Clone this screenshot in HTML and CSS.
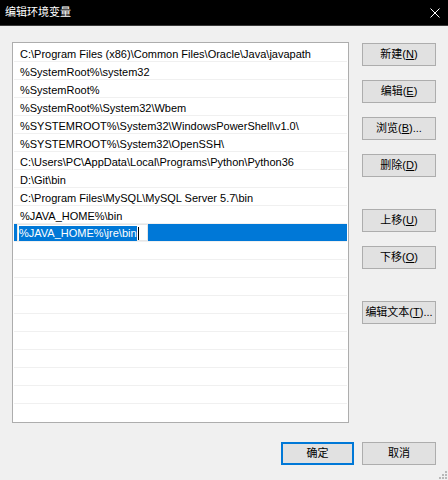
FILE: index.html
```html
<!DOCTYPE html>
<html lang="zh-CN">
<head>
<meta charset="utf-8">
<title>编辑环境变量</title>
<link rel="stylesheet" href="styles.css">
</head>
<body>
<div class="window">
  <div class="titlebar">
    <span class="title">编辑环境变量</span>
    <span class="close">
      <svg width="10" height="10" viewBox="0 0 10 10"><path d="M0.5 0.5 L9.5 9.5 M9.5 0.5 L0.5 9.5" stroke="#fff" stroke-width="1" fill="none"/></svg>
    </span>
  </div>
  <div class="body">
    <div class="main">
      <div class="list">
        <div class="row">C:\Program Files (x86)\Common Files\Oracle\Java\javapath</div>
        <div class="row">%SystemRoot%\system32</div>
        <div class="row">%SystemRoot%</div>
        <div class="row">%SystemRoot%\System32\Wbem</div>
        <div class="row">%SYSTEMROOT%\System32\WindowsPowerShell\v1.0\</div>
        <div class="row">%SYSTEMROOT%\System32\OpenSSH\</div>
        <div class="row">C:\Users\PC\AppData\Local\Programs\Python\Python36</div>
        <div class="row">D:\Git\bin</div>
        <div class="row">C:\Program Files\MySQL\MySQL Server 5.7\bin</div>
        <div class="row">%JAVA_HOME%\bin</div>
        <div class="row selected"><span class="edit"><span class="sel">%JAVA_HOME%\jre\bin</span><span class="caret"></span></span></div>
        <div class="row"></div>
        <div class="row"></div>
        <div class="row"></div>
        <div class="row"></div>
        <div class="row"></div>
        <div class="row"></div>
        <div class="row"></div>
        <div class="row"></div>
        <div class="row"></div>
        <div class="row last"></div>
      </div>
      <div class="side">
        <button class="btn">新建(<u>N</u>)</button>
        <button class="btn">编辑(<u>E</u>)</button>
        <button class="btn">浏览(<u>B</u>)...</button>
        <button class="btn">删除(<u>D</u>)</button>
        <button class="btn gap">上移(<u>U</u>)</button>
        <button class="btn">下移(<u>O</u>)</button>
        <button class="btn gap2">编辑文本(<u>T</u>)...</button>
      </div>
    </div>
    <div class="footer">
      <button class="btn default">确定</button>
      <button class="btn">取消</button>
    </div>
    <span class="grip">
      <svg width="8" height="8" viewBox="0 0 8 8" fill="#b8b8b8"><rect x="6" y="0" width="2" height="2"/><rect x="3" y="3" width="2" height="2"/><rect x="6" y="3" width="2" height="2"/><rect x="0" y="6" width="2" height="2"/><rect x="3" y="6" width="2" height="2"/><rect x="6" y="6" width="2" height="2"/></svg>
    </span>
  </div>
</div>
</body>
</html>
```
FILE: styles.css
```css
* { box-sizing: border-box; }
html, body { margin: 0; padding: 0; }
body {
  width: 448px;
  height: 480px;
  background: #f0f0f0;
  font-family: "Liberation Sans", "Noto Sans CJK SC", sans-serif;
  font-size: 11px;
  color: #000;
  overflow: hidden;
}
.window { width: 448px; height: 480px; display: flex; flex-direction: column; }
.titlebar {
  height: 26px;
  background: #000;
  color: #fff;
  display: flex;
  align-items: center;
  justify-content: space-between;
  padding: 0 8px 0 5px;
  border-bottom: 1px solid #3a3a3a;
}
.title { font-size: 11px; line-height: 1; }
.close { display: flex; align-items: center; }
.body { position: relative; flex: 1; padding: 16px 0 0 12px; }
.main { display: flex; }
.list {
  width: 337px;
  height: 381px;
  border: 1px solid #adadad;
  background: #fff;
  padding: 1px;
  overflow: hidden;
}
.row {
  height: 18px;
  border-bottom: 1px solid #f0f0f0;
  padding-left: 6px;
  line-height: 20px;
  white-space: nowrap;
  overflow: hidden;
}
.row.last { border-bottom: none; }
.row.selected { background: #0078d7; padding-left: 3px; display: flex; align-items: center; line-height: 15px; }
.edit {
  display: flex;
  width: 131px;
  height: 17px;
  background: #fff;
  border: 1px solid #e6e6e6;
  padding: 1px 0 0 1px;
  align-items: center;
}
.sel { background: #0078d7; color: #fff; line-height: 15px; height: 15px; }
.caret { width: 1px; height: 13px; margin-left: 1px; background: #000; }
.side {
  margin-left: 13px;
  display: flex;
  flex-direction: column;
  gap: 14px;
  padding-top: 1px;
}
.btn {
  width: 74px;
  height: 23px;
  background: #e1e1e1;
  border: 1px solid #adadad;
  font-family: "Liberation Sans", "Noto Sans CJK SC", sans-serif;
  font-size: 11px;
  color: #000;
  padding: 0;
  line-height: 21px;
  border-radius: 0;
  white-space: nowrap;
}
.btn u { text-underline-offset: 1px; }
.btn.gap { margin-top: 18px; }
.btn.gap2 { margin-top: 18px; }
.footer {
  display: flex;
  justify-content: flex-end;
  gap: 8px;
  padding-right: 12px;
  margin-top: 19px;
}
.btn.default { border: 2px solid #0078d7; width: 73px; line-height: 19px; }
.grip { position: absolute; right: 1px; bottom: 1px; display: flex; }
```
